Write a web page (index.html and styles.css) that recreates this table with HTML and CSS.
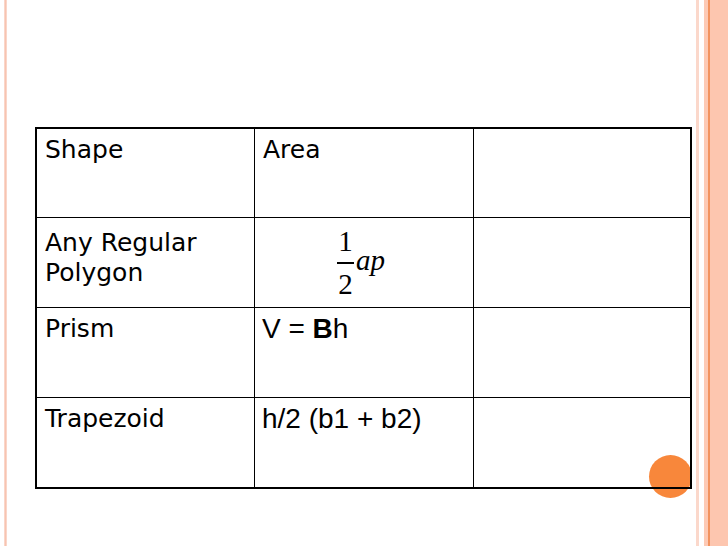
FILE: index.html
```html
<!DOCTYPE html>
<html>
<head>
<meta charset="utf-8">
<link rel="stylesheet" href="styles.css">
</head>
<body>
<div class="slide">
  <table class="grid">
    <colgroup>
      <col class="c1"><col class="c2"><col class="c3">
    </colgroup>
    <tr class="r1">
      <td class="hand">Shape</td>
      <td class="hand">Area</td>
      <td class="last"></td>
    </tr>
    <tr class="r2">
      <td class="hand two">Any Regular<br>Polygon</td>
      <td class="math">
        <div class="formula">
          <div class="frac"><span class="num">1</span><span class="bar"></span><span class="den">2</span></div>
          <span class="ap">ap</span>
        </div>
      </td>
      <td class="last"></td>
    </tr>
    <tr class="r3">
      <td class="hand">Prism</td>
      <td class="sans">V = <b>B</b>h</td>
      <td class="last"></td>
    </tr>
    <tr class="r4 end">
      <td class="hand">Trapezoid</td>
      <td class="sans">h/2 (b1 + b2)</td>
      <td class="last"></td>
    </tr>
  </table>
  <div class="dot"></div>
</div>
</body>
</html>
```
FILE: styles.css
```css
html, body {
  margin: 0;
  padding: 0;
  width: 728px;
  height: 546px;
  overflow: hidden;
}
body {
  background: linear-gradient(to right,
    #ffffff 0 4px,
    #fad6c9 4px 5px,
    #f7c4b1 5px 6px,
    #fad6c9 6px 7px,
    #ffffff 7px 696px,
    #fbd8cb 696px 699px,
    #ffffff 699px 704px,
    #fdcab5 704px 708px,
    #f2935f 708px 710px,
    #fdc6af 710px 728px);
  color: #000;
}
.slide {
  position: relative;
  width: 728px;
  height: 546px;
  padding: 127px 0 0 35px;
  box-sizing: border-box;
}
.grid {
  position: relative;
  z-index: 1;
  border: 2px solid #000;
  border-collapse: separate;
  border-spacing: 0;
  table-layout: fixed;
  width: 657px;
}
.c1 { width: 218px; }
.c2 { width: 219px; }
.c3 { width: 216px; }
td {
  box-sizing: border-box;
  vertical-align: top;
  padding: 0;
  border-right: 1px solid #000;
  border-bottom: 1px solid #000;
}
td.last { border-right: none; }
tr.end td { border-bottom: none; }
.r1 td { height: 89px; }
.r2 td { height: 90px; }
.r3 td { height: 90px; }
.r4 td { height: 89px; }
.hand {
  font-family: "DejaVu Sans", sans-serif;
  font-size: 25px;
  line-height: 30px;
  padding: 6px 0 0 8px;
}
.hand.two { padding-top: 10px; }
.sans {
  font-family: "Liberation Sans", Arial, sans-serif;
  font-size: 28px;
  line-height: 32px;
  padding: 5px 0 0 7px;
}
.sans b { font-weight: 700; }
.math { padding: 13px 0 0 82px; }
.formula {
  display: flex;
  align-items: flex-start;
  font-family: "Liberation Serif", "Times New Roman", serif;
  font-size: 29px;
  line-height: 20px;
}
.frac {
  display: flex;
  flex-direction: column;
  align-items: center;
  width: 17px;
}
.num, .den { display: block; height: 20px; }
.bar {
  display: block;
  width: 17px;
  height: 1.5px;
  background: #000;
  margin: 11px 0 10px;
}
.ap {
  font-style: italic;
  margin: 19px 0 0 2px;
}
.dot {
  position: absolute;
  left: 649px;
  top: 455px;
  width: 43px;
  height: 43px;
  border-radius: 50%;
  background: #f8873b;
}
```
